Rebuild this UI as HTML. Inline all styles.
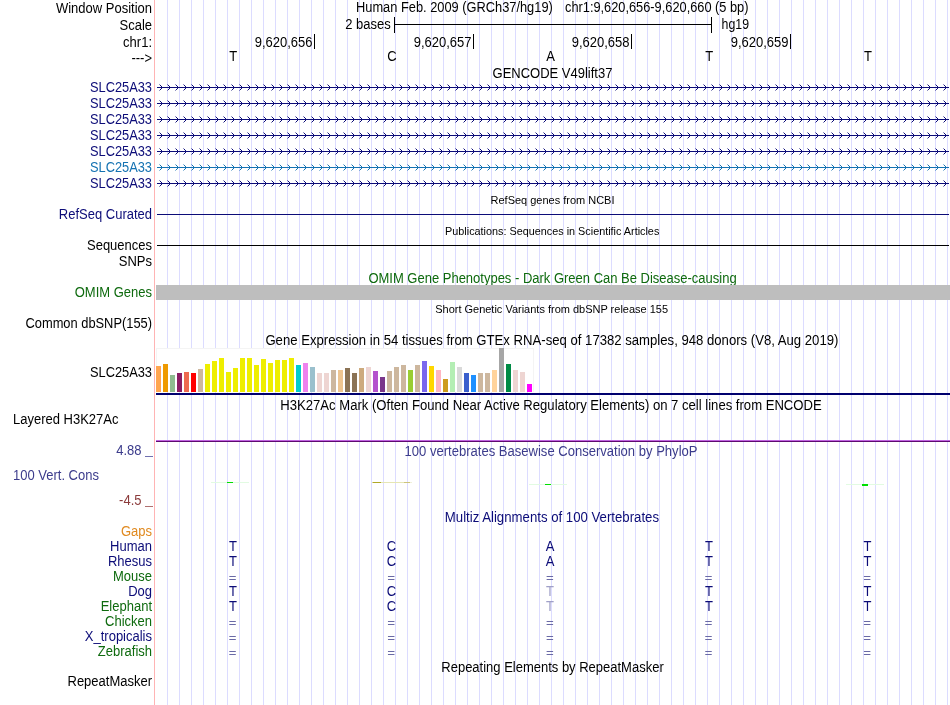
<!DOCTYPE html>
<html><head><meta charset="utf-8"><style>
html,body{margin:0;padding:0;background:#fff;width:950px;height:705px;overflow:hidden}
svg{display:block;will-change:transform}
text{font-family:"Liberation Sans",sans-serif}
</style></head><body>
<svg width="950" height="705" viewBox="0 0 950 705" shape-rendering="crispEdges">
<defs><pattern id="arN" patternUnits="userSpaceOnUse" x="159" y="84" width="8" height="16"><rect x="0" y="0" width="1" height="1" fill="#0c0c78" fill-opacity="0.45"/><rect x="1" y="1" width="1" height="1" fill="#0c0c78"/><rect x="2" y="2" width="1" height="3" fill="#0c0c78"/><rect x="1" y="5" width="1" height="1" fill="#0c0c78"/><rect x="0" y="6" width="1" height="1" fill="#0c0c78" fill-opacity="0.45"/></pattern><pattern id="arB" patternUnits="userSpaceOnUse" x="159" y="84" width="8" height="16"><rect x="0" y="0" width="1" height="1" fill="#1472b2" fill-opacity="0.45"/><rect x="1" y="1" width="1" height="1" fill="#1472b2"/><rect x="2" y="2" width="1" height="3" fill="#1472b2"/><rect x="1" y="5" width="1" height="1" fill="#1472b2"/><rect x="0" y="6" width="1" height="1" fill="#1472b2" fill-opacity="0.45"/></pattern></defs>
<rect x="0" y="0" width="950" height="705" fill="#fff"/>
<rect x="167" y="0" width="1" height="705" fill="#dcdcff"/>
<rect x="179" y="0" width="1" height="705" fill="#dcdcff"/>
<rect x="191" y="0" width="1" height="705" fill="#dcdcff"/>
<rect x="203" y="0" width="1" height="705" fill="#dcdcff"/>
<rect x="215" y="0" width="1" height="705" fill="#dcdcff"/>
<rect x="227" y="0" width="1" height="705" fill="#dcdcff"/>
<rect x="239" y="0" width="1" height="705" fill="#dcdcff"/>
<rect x="251" y="0" width="1" height="705" fill="#dcdcff"/>
<rect x="263" y="0" width="1" height="705" fill="#dcdcff"/>
<rect x="275" y="0" width="1" height="705" fill="#dcdcff"/>
<rect x="287" y="0" width="1" height="705" fill="#dcdcff"/>
<rect x="299" y="0" width="1" height="705" fill="#dcdcff"/>
<rect x="311" y="0" width="1" height="705" fill="#dcdcff"/>
<rect x="323" y="0" width="1" height="705" fill="#dcdcff"/>
<rect x="335" y="0" width="1" height="705" fill="#dcdcff"/>
<rect x="347" y="0" width="1" height="705" fill="#dcdcff"/>
<rect x="359" y="0" width="1" height="705" fill="#dcdcff"/>
<rect x="371" y="0" width="1" height="705" fill="#dcdcff"/>
<rect x="383" y="0" width="1" height="705" fill="#dcdcff"/>
<rect x="395" y="0" width="1" height="705" fill="#dcdcff"/>
<rect x="407" y="0" width="1" height="705" fill="#dcdcff"/>
<rect x="419" y="0" width="1" height="705" fill="#dcdcff"/>
<rect x="431" y="0" width="1" height="705" fill="#dcdcff"/>
<rect x="443" y="0" width="1" height="705" fill="#dcdcff"/>
<rect x="455" y="0" width="1" height="705" fill="#dcdcff"/>
<rect x="467" y="0" width="1" height="705" fill="#dcdcff"/>
<rect x="479" y="0" width="1" height="705" fill="#dcdcff"/>
<rect x="491" y="0" width="1" height="705" fill="#dcdcff"/>
<rect x="503" y="0" width="1" height="705" fill="#dcdcff"/>
<rect x="515" y="0" width="1" height="705" fill="#dcdcff"/>
<rect x="527" y="0" width="1" height="705" fill="#dcdcff"/>
<rect x="539" y="0" width="1" height="705" fill="#dcdcff"/>
<rect x="551" y="0" width="1" height="705" fill="#dcdcff"/>
<rect x="563" y="0" width="1" height="705" fill="#dcdcff"/>
<rect x="575" y="0" width="1" height="705" fill="#dcdcff"/>
<rect x="587" y="0" width="1" height="705" fill="#dcdcff"/>
<rect x="599" y="0" width="1" height="705" fill="#dcdcff"/>
<rect x="611" y="0" width="1" height="705" fill="#dcdcff"/>
<rect x="623" y="0" width="1" height="705" fill="#dcdcff"/>
<rect x="635" y="0" width="1" height="705" fill="#dcdcff"/>
<rect x="647" y="0" width="1" height="705" fill="#dcdcff"/>
<rect x="659" y="0" width="1" height="705" fill="#dcdcff"/>
<rect x="671" y="0" width="1" height="705" fill="#dcdcff"/>
<rect x="683" y="0" width="1" height="705" fill="#dcdcff"/>
<rect x="695" y="0" width="1" height="705" fill="#dcdcff"/>
<rect x="707" y="0" width="1" height="705" fill="#dcdcff"/>
<rect x="719" y="0" width="1" height="705" fill="#dcdcff"/>
<rect x="731" y="0" width="1" height="705" fill="#dcdcff"/>
<rect x="743" y="0" width="1" height="705" fill="#dcdcff"/>
<rect x="755" y="0" width="1" height="705" fill="#dcdcff"/>
<rect x="767" y="0" width="1" height="705" fill="#dcdcff"/>
<rect x="779" y="0" width="1" height="705" fill="#dcdcff"/>
<rect x="791" y="0" width="1" height="705" fill="#dcdcff"/>
<rect x="803" y="0" width="1" height="705" fill="#dcdcff"/>
<rect x="815" y="0" width="1" height="705" fill="#dcdcff"/>
<rect x="827" y="0" width="1" height="705" fill="#dcdcff"/>
<rect x="839" y="0" width="1" height="705" fill="#dcdcff"/>
<rect x="851" y="0" width="1" height="705" fill="#dcdcff"/>
<rect x="863" y="0" width="1" height="705" fill="#dcdcff"/>
<rect x="875" y="0" width="1" height="705" fill="#dcdcff"/>
<rect x="887" y="0" width="1" height="705" fill="#dcdcff"/>
<rect x="899" y="0" width="1" height="705" fill="#dcdcff"/>
<rect x="911" y="0" width="1" height="705" fill="#dcdcff"/>
<rect x="923" y="0" width="1" height="705" fill="#dcdcff"/>
<rect x="935" y="0" width="1" height="705" fill="#dcdcff"/>
<rect x="947" y="0" width="1" height="705" fill="#dcdcff"/>
<rect x="154" y="0" width="1" height="705" fill="#ffb4b4"/>
<text transform="translate(152,13) scale(1,1.07)" fill="#000" font-size="13" text-anchor="end">Window Position</text>
<text transform="translate(152,30) scale(1,1.07)" fill="#000" font-size="13" text-anchor="end">Scale</text>
<text transform="translate(152,47) scale(1,1.07)" fill="#000" font-size="13" text-anchor="end">chr1:</text>
<text transform="translate(152,63) scale(1,1.07)" fill="#000" font-size="13" text-anchor="end">---&gt;</text>
<text transform="translate(152,92) scale(1,1.07)" fill="#0c0c78" font-size="13" text-anchor="end" textLength="62.0" lengthAdjust="spacingAndGlyphs">SLC25A33</text>
<text transform="translate(152,108) scale(1,1.07)" fill="#0c0c78" font-size="13" text-anchor="end" textLength="62.0" lengthAdjust="spacingAndGlyphs">SLC25A33</text>
<text transform="translate(152,124) scale(1,1.07)" fill="#0c0c78" font-size="13" text-anchor="end" textLength="62.0" lengthAdjust="spacingAndGlyphs">SLC25A33</text>
<text transform="translate(152,140) scale(1,1.07)" fill="#0c0c78" font-size="13" text-anchor="end" textLength="62.0" lengthAdjust="spacingAndGlyphs">SLC25A33</text>
<text transform="translate(152,156) scale(1,1.07)" fill="#0c0c78" font-size="13" text-anchor="end" textLength="62.0" lengthAdjust="spacingAndGlyphs">SLC25A33</text>
<text transform="translate(152,172) scale(1,1.07)" fill="#1472b2" font-size="13" text-anchor="end" textLength="62.0" lengthAdjust="spacingAndGlyphs">SLC25A33</text>
<text transform="translate(152,188) scale(1,1.07)" fill="#0c0c78" font-size="13" text-anchor="end" textLength="62.0" lengthAdjust="spacingAndGlyphs">SLC25A33</text>
<text transform="translate(152,219) scale(1,1.07)" fill="#0c0c78" font-size="13" text-anchor="end">RefSeq Curated</text>
<text transform="translate(152,250) scale(1,1.07)" fill="#000" font-size="13" text-anchor="end">Sequences</text>
<text transform="translate(152,266) scale(1,1.07)" fill="#000" font-size="13" text-anchor="end">SNPs</text>
<text transform="translate(152,297) scale(1,1.07)" fill="#0e6a0e" font-size="13" text-anchor="end">OMIM Genes</text>
<text transform="translate(152,328) scale(1,1.07)" fill="#000" font-size="13" text-anchor="end" textLength="126.5" lengthAdjust="spacingAndGlyphs">Common dbSNP(155)</text>
<text transform="translate(152,377) scale(1,1.07)" fill="#000" font-size="13" text-anchor="end" textLength="62.0" lengthAdjust="spacingAndGlyphs">SLC25A33</text>
<text transform="translate(152,536) scale(1,1.07)" fill="#e08a20" font-size="13" text-anchor="end">Gaps</text>
<text transform="translate(152,551) scale(1,1.07)" fill="#0c0c78" font-size="13" text-anchor="end">Human</text>
<text transform="translate(152,566) scale(1,1.07)" fill="#0c0c78" font-size="13" text-anchor="end">Rhesus</text>
<text transform="translate(152,581) scale(1,1.07)" fill="#0e6a0e" font-size="13" text-anchor="end">Mouse</text>
<text transform="translate(152,596) scale(1,1.07)" fill="#0c0c78" font-size="13" text-anchor="end">Dog</text>
<text transform="translate(152,611) scale(1,1.07)" fill="#0e6a0e" font-size="13" text-anchor="end">Elephant</text>
<text transform="translate(152,626) scale(1,1.07)" fill="#0e6a0e" font-size="13" text-anchor="end">Chicken</text>
<text transform="translate(152,641) scale(1,1.07)" fill="#0c0c78" font-size="13" text-anchor="end">X_tropicalis</text>
<text transform="translate(152,656) scale(1,1.07)" fill="#0e6a0e" font-size="13" text-anchor="end">Zebrafish</text>
<text transform="translate(152,686) scale(1,1.07)" fill="#000" font-size="13" text-anchor="end">RepeatMasker</text>
<text transform="translate(13,424) scale(1,1.07)" fill="#000" font-size="13" text-anchor="start">Layered H3K27Ac</text>
<text transform="translate(141.5,455) scale(1,1.07)" fill="#3c3c8c" font-size="13" text-anchor="end">4.88</text>
<rect x="145" y="456" width="8" height="1" fill="#7070b0"/>
<text transform="translate(141.5,505) scale(1,1.07)" fill="#8c3c3c" font-size="13" text-anchor="end">-4.5</text>
<rect x="145" y="506" width="8" height="1" fill="#b07070"/>
<text transform="translate(13,480) scale(1,1.07)" fill="#3c3c8c" font-size="13" text-anchor="start">100 Vert. Cons</text>
<text transform="translate(356,12) scale(1,1.07)" fill="#000" font-size="13" text-anchor="start" textLength="196.8" lengthAdjust="spacingAndGlyphs">Human Feb. 2009 (GRCh37/hg19)</text>
<text transform="translate(565,12) scale(1,1.07)" fill="#000" font-size="13" text-anchor="start" textLength="183.5" lengthAdjust="spacingAndGlyphs">chr1:9,620,656-9,620,660 (5 bp)</text>
<text transform="translate(390.7,29) scale(1,1.07)" fill="#000" font-size="13" text-anchor="end">2 bases</text>
<text transform="translate(721.6,29) scale(1,1.07)" fill="#000" font-size="13" text-anchor="start" textLength="27.4" lengthAdjust="spacingAndGlyphs">hg19</text>
<rect x="394" y="17" width="1" height="16" fill="#000"/>
<rect x="711" y="17" width="1" height="16" fill="#000"/>
<rect x="394" y="24" width="318" height="1" fill="#000"/>
<rect x="314" y="34" width="1" height="15" fill="#000"/>
<text transform="translate(312.5,47) scale(1,1.07)" fill="#000" font-size="13" text-anchor="end">9,620,656</text>
<rect x="473" y="34" width="1" height="15" fill="#000"/>
<text transform="translate(471.5,47) scale(1,1.07)" fill="#000" font-size="13" text-anchor="end">9,620,657</text>
<rect x="631" y="34" width="1" height="15" fill="#000"/>
<text transform="translate(629.5,47) scale(1,1.07)" fill="#000" font-size="13" text-anchor="end">9,620,658</text>
<rect x="790" y="34" width="1" height="15" fill="#000"/>
<text transform="translate(788.5,47) scale(1,1.07)" fill="#000" font-size="13" text-anchor="end">9,620,659</text>
<text transform="translate(233.3,61) scale(1,1.07)" fill="#000" font-size="13" text-anchor="middle">T</text>
<text transform="translate(391.95,61) scale(1,1.07)" fill="#000" font-size="13" text-anchor="middle">C</text>
<text transform="translate(550.6,61) scale(1,1.07)" fill="#000" font-size="13" text-anchor="middle">A</text>
<text transform="translate(709.25,61) scale(1,1.07)" fill="#000" font-size="13" text-anchor="middle">T</text>
<text transform="translate(867.9,61) scale(1,1.07)" fill="#000" font-size="13" text-anchor="middle">T</text>
<text transform="translate(552.5,78) scale(1,1.07)" fill="#000" font-size="13" text-anchor="middle">GENCODE V49lift37</text>
<rect x="157" y="87" width="792" height="1" fill="#0c0c78"/>
<rect x="159" y="84" width="790" height="7" fill="url(#arN)"/>
<rect x="157" y="103" width="792" height="1" fill="#0c0c78"/>
<rect x="159" y="100" width="790" height="7" fill="url(#arN)"/>
<rect x="157" y="119" width="792" height="1" fill="#0c0c78"/>
<rect x="159" y="116" width="790" height="7" fill="url(#arN)"/>
<rect x="157" y="135" width="792" height="1" fill="#0c0c78"/>
<rect x="159" y="132" width="790" height="7" fill="url(#arN)"/>
<rect x="157" y="151" width="792" height="1" fill="#0c0c78"/>
<rect x="159" y="148" width="790" height="7" fill="url(#arN)"/>
<rect x="157" y="167" width="792" height="1" fill="#1472b2"/>
<rect x="159" y="164" width="790" height="7" fill="url(#arB)"/>
<rect x="157" y="183" width="792" height="1" fill="#0c0c78"/>
<rect x="159" y="180" width="790" height="7" fill="url(#arN)"/>
<text transform="translate(552.5,204) scale(1,1.07)" fill="#000" font-size="11" text-anchor="middle">RefSeq genes from NCBI</text>
<rect x="157" y="214" width="792" height="1" fill="#0c0c78"/>
<text transform="translate(552.2,235) scale(1,1.07)" fill="#000" font-size="11" text-anchor="middle" textLength="214.2" lengthAdjust="spacingAndGlyphs">Publications: Sequences in Scientific Articles</text>
<rect x="157" y="245" width="792" height="1" fill="#000"/>
<text transform="translate(552.5,283) scale(1,1.07)" fill="#0e6a0e" font-size="13" text-anchor="middle">OMIM Gene Phenotypes - Dark Green Can Be Disease-causing</text>
<rect x="156" y="285" width="794" height="15" fill="#bebebe"/>
<text transform="translate(551.6,313) scale(1,1.07)" fill="#000" font-size="11" text-anchor="middle">Short Genetic Variants from dbSNP release 155</text>
<text transform="translate(551.9,345) scale(1,1.07)" fill="#000" font-size="13" text-anchor="middle" textLength="573" lengthAdjust="spacingAndGlyphs">Gene Expression in 54 tissues from GTEx RNA-seq of 17382 samples, 948 donors (V8, Aug 2019)</text>
<rect x="156" y="348" width="378" height="44" fill="#f4f4f4"/>
<rect x="157" y="349" width="376" height="43" fill="#fff"/>
<rect x="156" y="366" width="5" height="26" fill="#FFA54F"/>
<rect x="163" y="364" width="5" height="28" fill="#EE9A00"/>
<rect x="170" y="375" width="5" height="17" fill="#8FBC8F"/>
<rect x="177" y="373" width="5" height="19" fill="#8B1C62"/>
<rect x="184" y="372" width="5" height="20" fill="#EE6A50"/>
<rect x="191" y="373" width="5" height="19" fill="#FF0000"/>
<rect x="198" y="369" width="5" height="23" fill="#CDB79E"/>
<rect x="205" y="364" width="5" height="28" fill="#EEEE00"/>
<rect x="212" y="361" width="5" height="31" fill="#EEEE00"/>
<rect x="219" y="358" width="5" height="34" fill="#EEEE00"/>
<rect x="226" y="372" width="5" height="20" fill="#EEEE00"/>
<rect x="233" y="368" width="5" height="24" fill="#EEEE00"/>
<rect x="240" y="358" width="5" height="34" fill="#EEEE00"/>
<rect x="247" y="358" width="5" height="34" fill="#EEEE00"/>
<rect x="254" y="365" width="5" height="27" fill="#EEEE00"/>
<rect x="261" y="359" width="5" height="33" fill="#EEEE00"/>
<rect x="268" y="363" width="5" height="29" fill="#EEEE00"/>
<rect x="275" y="360" width="5" height="32" fill="#EEEE00"/>
<rect x="282" y="360" width="5" height="32" fill="#EEEE00"/>
<rect x="289" y="358" width="5" height="34" fill="#EEEE00"/>
<rect x="296" y="365" width="5" height="27" fill="#00CDCD"/>
<rect x="303" y="363" width="5" height="29" fill="#EE82EE"/>
<rect x="310" y="367" width="5" height="25" fill="#9AC0CD"/>
<rect x="317" y="373" width="5" height="19" fill="#EED5D2"/>
<rect x="324" y="373" width="5" height="19" fill="#EED5D2"/>
<rect x="331" y="370" width="5" height="22" fill="#CDB79E"/>
<rect x="338" y="370" width="5" height="22" fill="#EEC591"/>
<rect x="345" y="368" width="5" height="24" fill="#8B7355"/>
<rect x="352" y="373" width="5" height="19" fill="#8B7355"/>
<rect x="359" y="368" width="5" height="24" fill="#CDAA7D"/>
<rect x="366" y="367" width="5" height="25" fill="#EED5D2"/>
<rect x="373" y="371" width="5" height="21" fill="#B452CD"/>
<rect x="380" y="377" width="5" height="15" fill="#7A378B"/>
<rect x="387" y="371" width="5" height="21" fill="#CDB79E"/>
<rect x="394" y="367" width="5" height="25" fill="#CDB79E"/>
<rect x="401" y="365" width="5" height="27" fill="#CDB79E"/>
<rect x="408" y="370" width="5" height="22" fill="#9ACD32"/>
<rect x="415" y="365" width="5" height="27" fill="#CDB79E"/>
<rect x="422" y="361" width="5" height="31" fill="#7A67EE"/>
<rect x="429" y="366" width="5" height="26" fill="#FFD700"/>
<rect x="436" y="370" width="5" height="22" fill="#FFB6C1"/>
<rect x="443" y="379" width="5" height="13" fill="#CD9B1D"/>
<rect x="450" y="362" width="5" height="30" fill="#B4EEB4"/>
<rect x="457" y="367" width="5" height="25" fill="#D9D9D9"/>
<rect x="464" y="373" width="5" height="19" fill="#3A5FCD"/>
<rect x="471" y="375" width="5" height="17" fill="#1E90FF"/>
<rect x="478" y="373" width="5" height="19" fill="#CDB79E"/>
<rect x="485" y="373" width="5" height="19" fill="#CDB79E"/>
<rect x="492" y="370" width="5" height="22" fill="#FFD39B"/>
<rect x="499" y="348" width="5" height="44" fill="#A6A6A6"/>
<rect x="506" y="364" width="5" height="28" fill="#008B45"/>
<rect x="513" y="370" width="5" height="22" fill="#EED5D2"/>
<rect x="520" y="372" width="5" height="20" fill="#EED5D2"/>
<rect x="527" y="384" width="5" height="8" fill="#FF00FF"/>
<rect x="156" y="393" width="794" height="2" fill="#00006e"/>
<text transform="translate(551.0,410) scale(1,1.07)" fill="#000" font-size="13" text-anchor="middle" textLength="541.4" lengthAdjust="spacingAndGlyphs">H3K27Ac Mark (Often Found Near Active Regulatory Elements) on 7 cell lines from ENCODE</text>
<rect x="156" y="440" width="794" height="1" fill="#c064e0"/>
<rect x="156" y="441" width="794" height="1" fill="#5e0a70"/>
<text transform="translate(551.0,456) scale(1,1.07)" fill="#3c3c8c" font-size="13" text-anchor="middle" textLength="293" lengthAdjust="spacingAndGlyphs">100 vertebrates Basewise Conservation by PhyloP</text>
<rect x="211" y="482" width="38" height="1" fill="#e2fbe2"/>
<rect x="227" y="482" width="6" height="1" fill="#00e000"/>
<rect x="372" y="482" width="40" height="1" fill="#e6e6b4"/>
<rect x="372" y="482" width="1" height="1" fill="#d8d490"/>
<rect x="373" y="482" width="8" height="1" fill="#b0a828"/>
<rect x="404" y="482" width="6" height="1" fill="#ccc47a"/>
<rect x="410" y="482" width="2" height="1" fill="#f0f0d8"/>
<rect x="529" y="484" width="38" height="1" fill="#e2fbe2"/>
<rect x="545" y="484" width="6" height="1" fill="#00e000"/>
<rect x="846" y="484" width="38" height="1" fill="#e2fbe2"/>
<rect x="862" y="484" width="6" height="2" fill="#00e000"/>
<text transform="translate(551.9,522) scale(1,1.07)" fill="#0c0c78" font-size="13" text-anchor="middle" textLength="214.2" lengthAdjust="spacingAndGlyphs">Multiz Alignments of 100 Vertebrates</text>
<text transform="translate(232.9,551) scale(1,1.07)" fill="#0c0c78" font-size="13" text-anchor="middle">T</text>
<text transform="translate(391.55,551) scale(1,1.07)" fill="#0c0c78" font-size="13" text-anchor="middle">C</text>
<text transform="translate(550.2,551) scale(1,1.07)" fill="#0c0c78" font-size="13" text-anchor="middle">A</text>
<text transform="translate(708.85,551) scale(1,1.07)" fill="#0c0c78" font-size="13" text-anchor="middle">T</text>
<text transform="translate(867.5,551) scale(1,1.07)" fill="#0c0c78" font-size="13" text-anchor="middle">T</text>
<text transform="translate(232.9,566) scale(1,1.07)" fill="#0c0c78" font-size="13" text-anchor="middle">T</text>
<text transform="translate(391.55,566) scale(1,1.07)" fill="#0c0c78" font-size="13" text-anchor="middle">C</text>
<text transform="translate(550.2,566) scale(1,1.07)" fill="#0c0c78" font-size="13" text-anchor="middle">A</text>
<text transform="translate(708.85,566) scale(1,1.07)" fill="#0c0c78" font-size="13" text-anchor="middle">T</text>
<text transform="translate(867.5,566) scale(1,1.07)" fill="#0c0c78" font-size="13" text-anchor="middle">T</text>
<rect x="229.30" y="576" width="6.5" height="1" fill="#6a6aa6" shape-rendering="auto"/>
<rect x="229.30" y="579" width="6.5" height="1" fill="#6a6aa6" shape-rendering="auto"/>
<rect x="387.95" y="576" width="6.5" height="1" fill="#6a6aa6" shape-rendering="auto"/>
<rect x="387.95" y="579" width="6.5" height="1" fill="#6a6aa6" shape-rendering="auto"/>
<rect x="546.60" y="576" width="6.5" height="1" fill="#6a6aa6" shape-rendering="auto"/>
<rect x="546.60" y="579" width="6.5" height="1" fill="#6a6aa6" shape-rendering="auto"/>
<rect x="705.25" y="576" width="6.5" height="1" fill="#6a6aa6" shape-rendering="auto"/>
<rect x="705.25" y="579" width="6.5" height="1" fill="#6a6aa6" shape-rendering="auto"/>
<rect x="863.90" y="576" width="6.5" height="1" fill="#6a6aa6" shape-rendering="auto"/>
<rect x="863.90" y="579" width="6.5" height="1" fill="#6a6aa6" shape-rendering="auto"/>
<text transform="translate(232.9,596) scale(1,1.07)" fill="#0c0c78" font-size="13" text-anchor="middle">T</text>
<text transform="translate(391.55,596) scale(1,1.07)" fill="#0c0c78" font-size="13" text-anchor="middle">C</text>
<text transform="translate(550.0,596) scale(1,1.07)" fill="#a0a0c8" font-size="13" text-anchor="middle">T</text>
<text transform="translate(708.85,596) scale(1,1.07)" fill="#0c0c78" font-size="13" text-anchor="middle">T</text>
<text transform="translate(867.5,596) scale(1,1.07)" fill="#0c0c78" font-size="13" text-anchor="middle">T</text>
<text transform="translate(232.9,611) scale(1,1.07)" fill="#0c0c78" font-size="13" text-anchor="middle">T</text>
<text transform="translate(391.55,611) scale(1,1.07)" fill="#0c0c78" font-size="13" text-anchor="middle">C</text>
<text transform="translate(550.0,611) scale(1,1.07)" fill="#a0a0c8" font-size="13" text-anchor="middle">T</text>
<text transform="translate(708.85,611) scale(1,1.07)" fill="#0c0c78" font-size="13" text-anchor="middle">T</text>
<text transform="translate(867.5,611) scale(1,1.07)" fill="#0c0c78" font-size="13" text-anchor="middle">T</text>
<rect x="229.30" y="621" width="6.5" height="1" fill="#6a6aa6" shape-rendering="auto"/>
<rect x="229.30" y="624" width="6.5" height="1" fill="#6a6aa6" shape-rendering="auto"/>
<rect x="387.95" y="621" width="6.5" height="1" fill="#6a6aa6" shape-rendering="auto"/>
<rect x="387.95" y="624" width="6.5" height="1" fill="#6a6aa6" shape-rendering="auto"/>
<rect x="546.60" y="621" width="6.5" height="1" fill="#6a6aa6" shape-rendering="auto"/>
<rect x="546.60" y="624" width="6.5" height="1" fill="#6a6aa6" shape-rendering="auto"/>
<rect x="705.25" y="621" width="6.5" height="1" fill="#6a6aa6" shape-rendering="auto"/>
<rect x="705.25" y="624" width="6.5" height="1" fill="#6a6aa6" shape-rendering="auto"/>
<rect x="863.90" y="621" width="6.5" height="1" fill="#6a6aa6" shape-rendering="auto"/>
<rect x="863.90" y="624" width="6.5" height="1" fill="#6a6aa6" shape-rendering="auto"/>
<rect x="229.30" y="636" width="6.5" height="1" fill="#6a6aa6" shape-rendering="auto"/>
<rect x="229.30" y="639" width="6.5" height="1" fill="#6a6aa6" shape-rendering="auto"/>
<rect x="387.95" y="636" width="6.5" height="1" fill="#6a6aa6" shape-rendering="auto"/>
<rect x="387.95" y="639" width="6.5" height="1" fill="#6a6aa6" shape-rendering="auto"/>
<rect x="546.60" y="636" width="6.5" height="1" fill="#6a6aa6" shape-rendering="auto"/>
<rect x="546.60" y="639" width="6.5" height="1" fill="#6a6aa6" shape-rendering="auto"/>
<rect x="705.25" y="636" width="6.5" height="1" fill="#6a6aa6" shape-rendering="auto"/>
<rect x="705.25" y="639" width="6.5" height="1" fill="#6a6aa6" shape-rendering="auto"/>
<rect x="863.90" y="636" width="6.5" height="1" fill="#6a6aa6" shape-rendering="auto"/>
<rect x="863.90" y="639" width="6.5" height="1" fill="#6a6aa6" shape-rendering="auto"/>
<rect x="229.30" y="651" width="6.5" height="1" fill="#6a6aa6" shape-rendering="auto"/>
<rect x="229.30" y="654" width="6.5" height="1" fill="#6a6aa6" shape-rendering="auto"/>
<rect x="387.95" y="651" width="6.5" height="1" fill="#6a6aa6" shape-rendering="auto"/>
<rect x="387.95" y="654" width="6.5" height="1" fill="#6a6aa6" shape-rendering="auto"/>
<rect x="546.60" y="651" width="6.5" height="1" fill="#6a6aa6" shape-rendering="auto"/>
<rect x="546.60" y="654" width="6.5" height="1" fill="#6a6aa6" shape-rendering="auto"/>
<rect x="705.25" y="651" width="6.5" height="1" fill="#6a6aa6" shape-rendering="auto"/>
<rect x="705.25" y="654" width="6.5" height="1" fill="#6a6aa6" shape-rendering="auto"/>
<rect x="863.90" y="651" width="6.5" height="1" fill="#6a6aa6" shape-rendering="auto"/>
<rect x="863.90" y="654" width="6.5" height="1" fill="#6a6aa6" shape-rendering="auto"/>
<text transform="translate(552.5,672) scale(1,1.07)" fill="#000" font-size="13" text-anchor="middle">Repeating Elements by RepeatMasker</text>
</svg>
</body></html>
